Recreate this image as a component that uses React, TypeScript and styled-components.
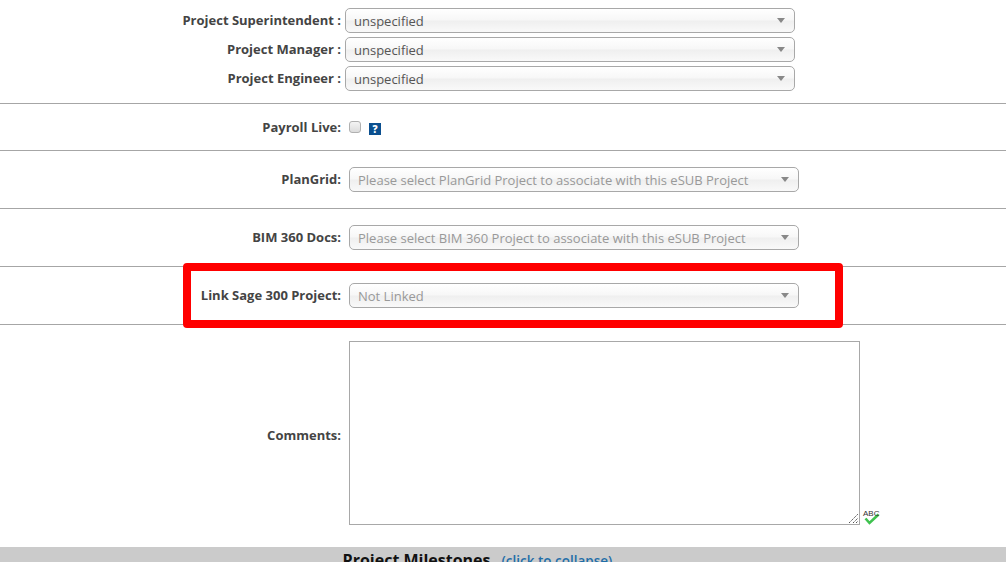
import React from "react";
import styled, { createGlobalStyle } from "styled-components";

const Global = createGlobalStyle`
  html, body { margin: 0; padding: 0; background: #fff; overflow: hidden; }
  body { font-family: "Open Sans", "Liberation Sans", sans-serif; font-size: 13px; color: #444; }
`;

const Page = styled.div`
  position: relative;
  width: 1006px;
  height: 562px;
  overflow: hidden;
`;

const Section = styled.section<{ $height: number; $top?: number; $gap?: number }>`
  height: ${(p) => p.$height}px;
  box-sizing: border-box;
  border-bottom: 1px solid #a6a6a6;
  padding-top: ${(p) => p.$top ?? 0}px;
  display: flex;
  flex-direction: column;
  gap: ${(p) => p.$gap ?? 0}px;
`;

const Row = styled.div<{ $gap: number }>`
  display: flex;
  align-items: center;
  gap: ${(p) => p.$gap}px;
`;

const Label = styled.label<{ $shift?: number }>`
  width: 341px;
  flex: none;
  text-align: right;
  font-weight: 700;
  font-size: 13px;
  line-height: 18px;
  color: #444;
  position: relative;
  top: ${(p) => p.$shift ?? -1}px;
`;

const Select = styled.div<{ $muted?: boolean }>`
  width: 450px;
  height: 25px;
  box-sizing: border-box;
  border: 1px solid #a8a8a8;
  border-radius: 5px;
  background: linear-gradient(#ffffff 0%, #f7f7f7 48%, #efefef 52%, #f9f9f9 100%);
  display: flex;
  align-items: center;
  justify-content: space-between;
  padding: 1px 9px 0 8px;
  font-size: 13px;
  color: ${(p) => (p.$muted ? "#999" : "#555")};
`;

const Arrow = styled.span`
  width: 0;
  height: 0;
  border-left: 4px solid transparent;
  border-right: 4px solid transparent;
  border-top: 5px solid #888;
  margin-top: -2px;
`;

const Check = styled.span`
  display: block;
  width: 10px;
  height: 10px;
  border: 1px solid #b0b0b0;
  border-radius: 3px;
  background: linear-gradient(#f4f4f4, #dcdcdc);
  flex: none;
  margin-top: -3px;
`;

const Help = styled.span`
  display: block;
  width: 12px;
  height: 12px;
  margin-top: 2px;
  background: #0b4f8f;
  color: #fff;
  font-weight: 800;
  font-size: 10px;
  line-height: 12px;
  text-align: center;
`;

const PayrollRow = styled(Row)`
  margin-top: 15px;
`;

const TextArea = styled.div`
  width: 511px;
  height: 184px;
  box-sizing: border-box;
  border: 1px solid #a8a8a8;
  flex: none;
  position: relative;
  background: #fff;
`;

const Grip = styled.svg`
  position: absolute;
  right: 0;
  bottom: 0;
`;

const CommentsBlock = styled(Row)`
  margin-top: 16px;
`;

const Spell = styled.span`
  position: relative;
  align-self: flex-end;
  width: 18px;
  height: 16px;
  margin: 0 0 -1px -6px;
  flex: none;
`;

const SpellText = styled.span`
  position: absolute;
  left: 1px;
  top: -1px;
  font-family: "Liberation Sans", sans-serif;
  font-size: 8px;
  color: #333;
  line-height: 9px;
`;

const Bar = styled.div`
  margin-top: 22px;
  height: 40px;
  background: #cbcbcb;
  display: flex;
  justify-content: center;
  align-items: baseline;
  gap: 11px;
  padding-top: 2px;
  padding-right: 51px;
  box-sizing: border-box;
`;

const BarTitle = styled.span`
  font-weight: 700;
  font-size: 16px;
  line-height: 22px;
  color: #111;
`;

const BarLink = styled.a`
  font-weight: 600;
  font-size: 13.5px;
  color: #1f6ea8;
`;

const Highlight = styled.div`
  position: absolute;
  left: 183px;
  top: 263px;
  width: 660px;
  height: 65px;
  box-sizing: border-box;
  border: 8px solid #ff0000;
  border-radius: 4px;
  pointer-events: none;
`;

const people = ["Project Superintendent :", "Project Manager :", "Project Engineer :"];
const links = [
  { label: "PlanGrid:", value: "Please select PlanGrid Project to associate with this eSUB Project" },
  { label: "BIM 360 Docs:", value: "Please select BIM 360 Project to associate with this eSUB Project" },
  { label: "Link Sage 300 Project:", value: "Not Linked" },
];

export default function App() {
  return (
    <Page>
      <Global />
      <Section $height={104} $top={8} $gap={4}>
        {people.map((p) => (
          <Row $gap={4} key={p}>
            <Label>{p}</Label>
            <Select>
              unspecified
              <Arrow />
            </Select>
          </Row>
        ))}
      </Section>
      <Section $height={47}>
        <PayrollRow $gap={8}>
          <Label>Payroll Live:</Label>
          <Check />
          <Help>?</Help>
        </PayrollRow>
      </Section>
      {links.map((l) => (
        <Section $height={58} $top={16} key={l.label}>
          <Row $gap={8}>
            <Label>{l.label}</Label>
            <Select $muted>
              {l.value}
              <Arrow />
            </Select>
          </Row>
        </Section>
      ))}
      <CommentsBlock $gap={8}>
        <Label $shift={2}>Comments:</Label>
        <TextArea>
          <Grip width="11" height="11" viewBox="0 0 11 11">
            <path d="M1 10 10 1M5 10 10 5M8 10 10 8" stroke="#555" strokeWidth="1" strokeDasharray="1.5 0.7" fill="none" />
          </Grip>
        </TextArea>
        <Spell>
          <SpellText>ABC</SpellText>
          <svg width="18" height="16" viewBox="0 0 18 16">
            <path d="M3.5 8.5 7.5 13 16.5 4.5" stroke="#3fc24f" strokeWidth="2.6" fill="none" />
          </svg>
        </Spell>
      </CommentsBlock>
      <Bar>
        <BarTitle>Project Milestones</BarTitle>
        <BarLink>(click to collapse)</BarLink>
      </Bar>
      <Highlight />
    </Page>
  );
}
